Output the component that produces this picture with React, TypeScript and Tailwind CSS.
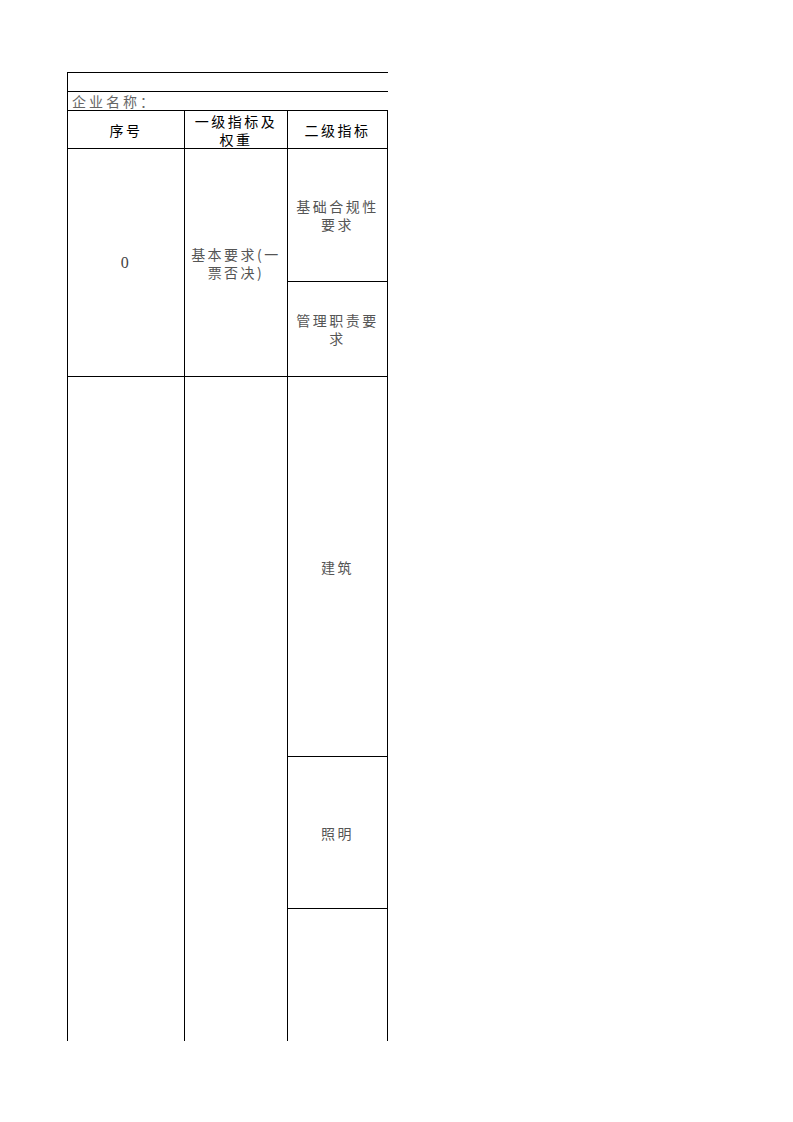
const font = { fontFamily: '"Noto Sans CJK SC", "Liberation Serif", sans-serif' };

function Cell({ h, last, top = true, className = "", children }: { h: number; last?: boolean; top?: boolean; className?: string; children?: React.ReactNode }) {
  return (
    <div
      className={`flex items-center justify-center text-center border-l border-black ${top ? "border-t" : ""} ${last ? "border-r" : ""} ${className}`}
      style={{ height: h }}
    >
      {children}
    </div>
  );
}

export default function App() {
  return (
    <div className="w-[793px] h-[1122px] bg-white" style={font}>
      <div className="ml-[67px] pt-[72px] w-[321px] text-[14px] leading-[18px] tracking-[2.5px]">
        <div className="h-[19px] border-l border-t border-black"></div>
        <div className="h-[19px] border-l border-t border-black text-[#666] pl-[4px] flex items-end leading-[17px] tracking-[3px]">企业名称：</div>

        <div className="grid grid-cols-[117px_103px_101px] text-black">
          <Cell h={38}>序号</Cell>
          <Cell h={38}>一级指标及<br />权重</Cell>
          <Cell h={38} last>二级指标</Cell>
        </div>

        <div className="grid grid-cols-[117px_103px_101px] text-[#555]">
          <Cell h={228}><span className="font-['Liberation_Serif'] text-[16px] text-[#444]">0</span></Cell>
          <Cell h={228}>基本要求(一<br />票否决)</Cell>
          <div className="flex flex-col">
            <Cell h={133} last>基础合规性<br />要求</Cell>
            <Cell h={95} last>管理职责要<br />求</Cell>
          </div>
        </div>

        <div className="grid grid-cols-[117px_103px_101px] text-[#555]">
          <Cell h={665}></Cell>
          <Cell h={665}></Cell>
          <div className="flex flex-col">
            <Cell h={380} last>建筑</Cell>
            <Cell h={152} last>照明</Cell>
            <Cell h={133} last></Cell>
          </div>
        </div>
      </div>
    </div>
  );
}
